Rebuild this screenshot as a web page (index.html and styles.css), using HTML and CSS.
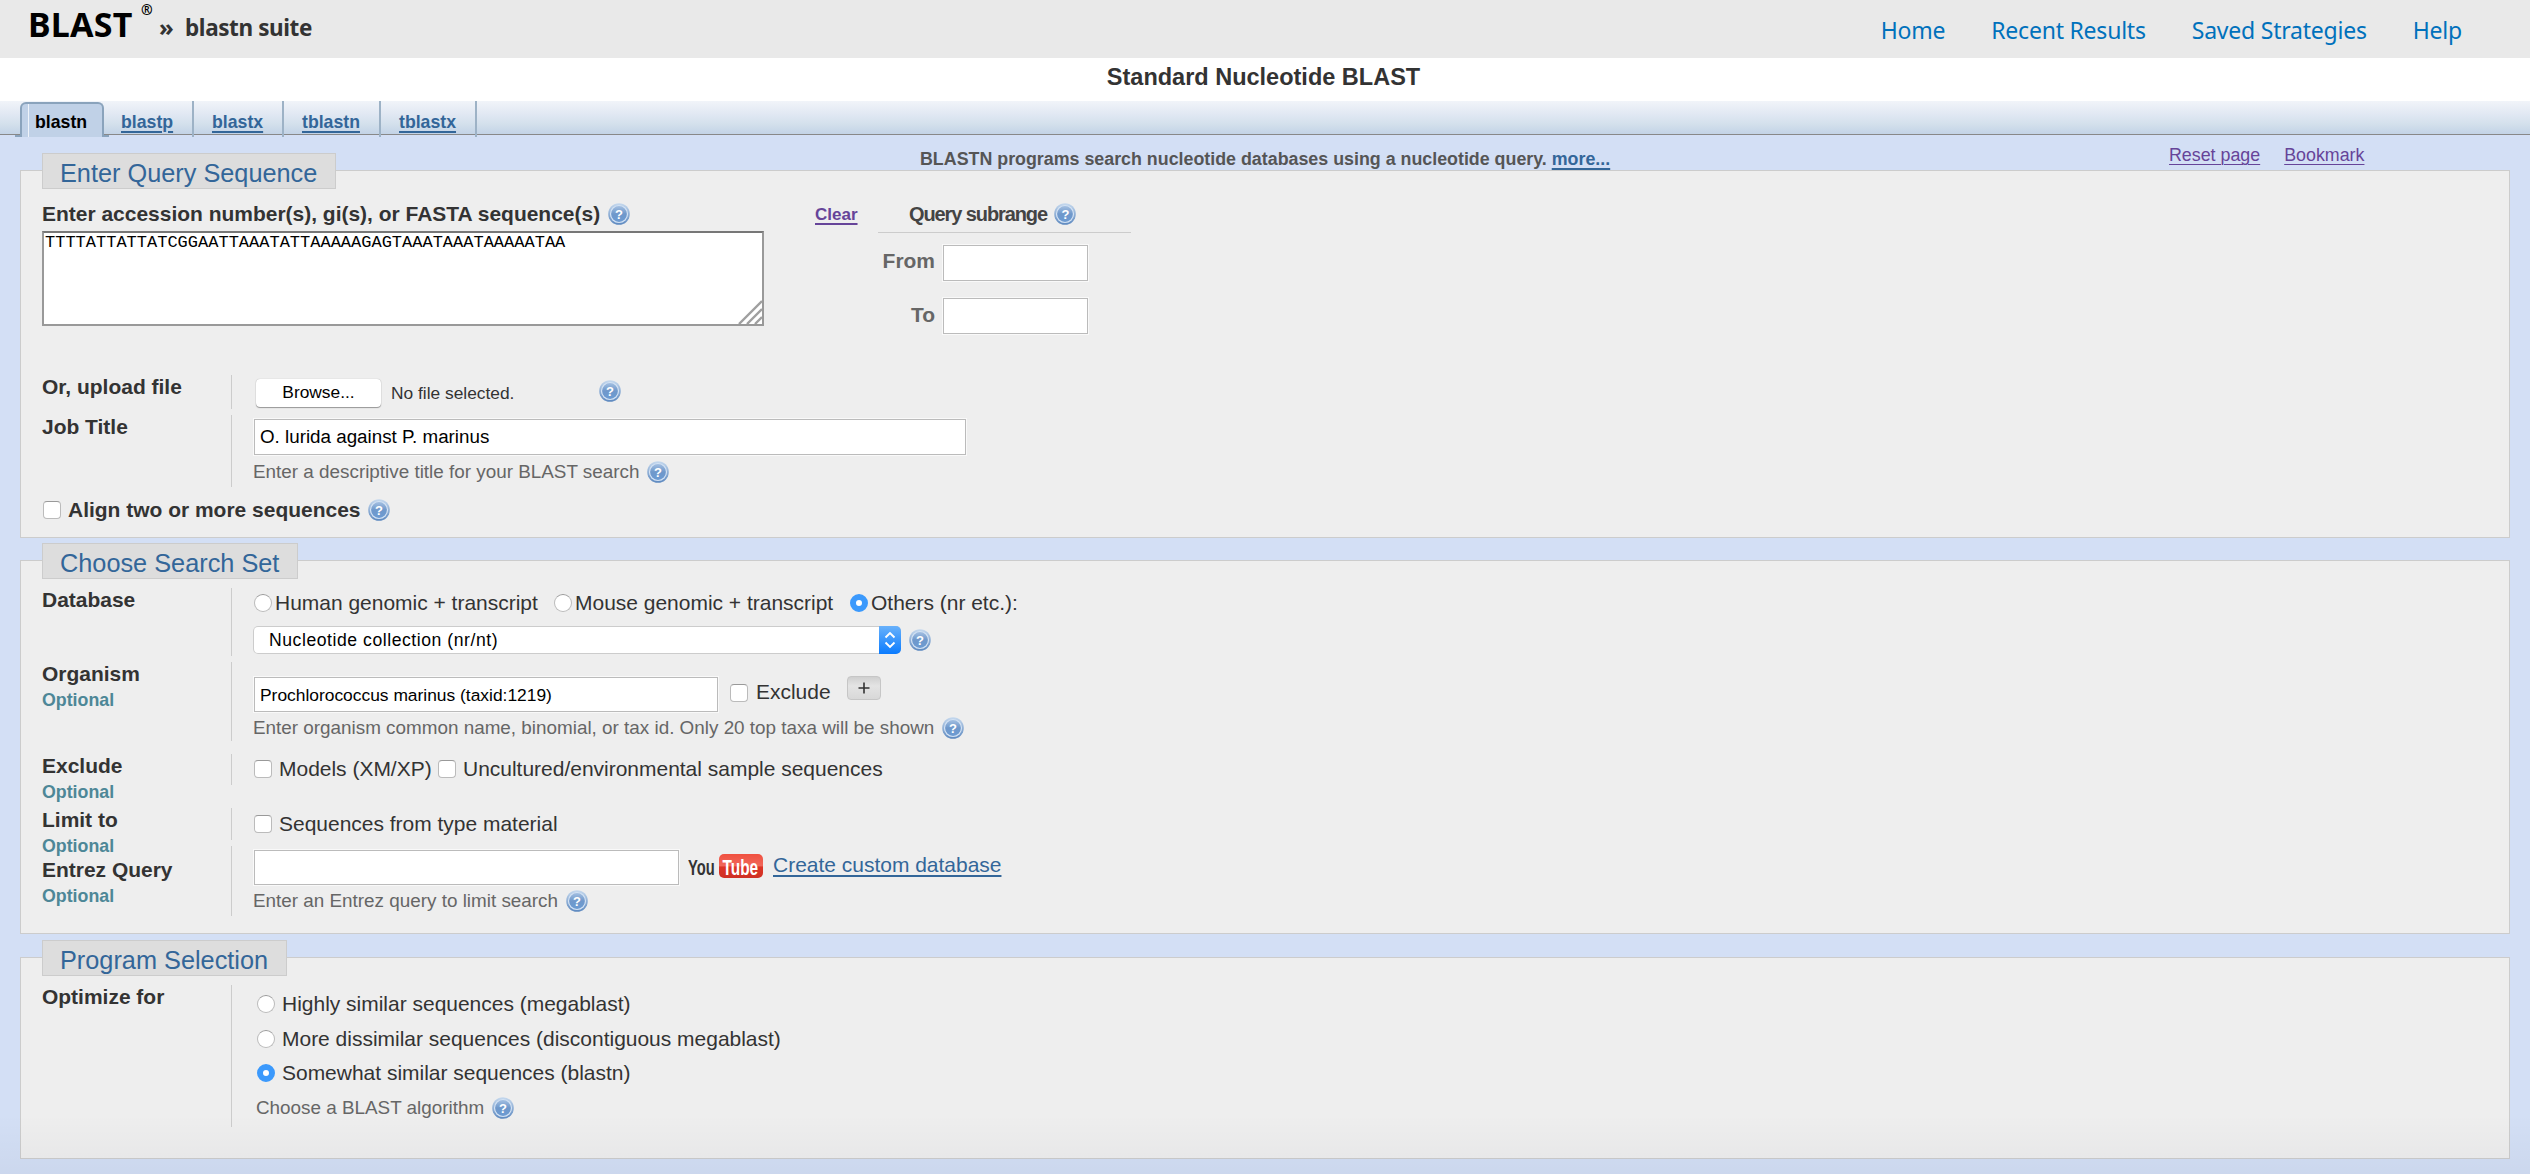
FILE: index.html
```html
<!DOCTYPE html>
<html lang="en">
<head>
<meta charset="utf-8">
<title>Standard Nucleotide BLAST</title>
<link rel="stylesheet" href="styles.css">
</head>
<body>
<svg class="defs" width="0" height="0" aria-hidden="true">
  <defs>
    <linearGradient id="ball" x1="0" y1="0" x2="0" y2="1"><stop offset="0" stop-color="#a3bfe1"/><stop offset=".5" stop-color="#6f98cb"/><stop offset="1" stop-color="#6c9bd2"/></linearGradient>
    <linearGradient id="rim" x1="0" y1="0" x2="0" y2="1"><stop offset="0" stop-color="#c6d9ee"/><stop offset="1" stop-color="#5c88bf"/></linearGradient>
    <linearGradient id="tube" x1="0" y1="0" x2="0" y2="1"><stop offset="0" stop-color="#f0503f"/><stop offset=".48" stop-color="#f0675a"/><stop offset=".55" stop-color="#dc3426"/><stop offset="1" stop-color="#cf3024"/></linearGradient>
    <symbol id="help" viewBox="0 0 22 22">
      <circle cx="11" cy="11" r="10.8" fill="url(#rim)"/>
      <circle cx="11" cy="11" r="9.1" fill="#d3e2f4"/>
      <circle cx="11" cy="11" r="7.9" fill="url(#ball)"/>
      <text x="11" y="15.6" text-anchor="middle" font-family="Liberation Sans, sans-serif" font-weight="700" font-size="13" fill="#fff">?</text>
    </symbol>
  </defs>
</svg>

<header class="topbar">
  <div class="brand"><span class="brand-name">BLAST</span><span class="brand-reg">®</span><span class="brand-sep">»</span><span class="brand-suite">blastn suite</span></div>
  <nav class="topnav"><a>Home</a><a>Recent Results</a><a>Saved Strategies</a><a>Help</a></nav>
</header>

<h1 class="title">Standard Nucleotide BLAST</h1>

<nav class="tabs">
  <a class="tab tab-active">blastn</a><a class="tab t2">blastp</a><a class="tab t3">blastx</a><a class="tab t4">tblastn</a><a class="tab t5">tblastx</a>
</nav>

<main>
  <div class="intro">
    <p class="intro-text">BLASTN programs search nucleotide databases using a nucleotide query. <a class="link">more...</a></p>
    <div class="page-links"><a class="visited">Reset page</a><a class="visited">Bookmark</a></div>
  </div>

  <section class="panel panel-query">
    <h2 class="legend">Enter Query Sequence</h2>
    <div class="query">
      <div class="query-main">
        <div class="line strong">Enter accession number(s), gi(s), or FASTA sequence(s)<svg class="help"><use href="#help"/></svg></div>
        <div class="seq">TTTTATTATTATCGGAATTAAATATTAAAAAGAGTAAATAAATAAAAATAA<svg class="grip" viewBox="0 0 24 24"><path d="M1 24 24 1M9 24 24 9M17 24 24 17" fill="none" stroke="#a0a0a0" stroke-width="2.4"/></svg></div>
      </div>
      <a class="visited clear">Clear</a>
      <div class="range">
        <div class="range-head">Query subrange<svg class="help"><use href="#help"/></svg></div>
        <div class="range-row"><span class="range-label">From</span><span class="box box-num"></span></div>
        <div class="range-row range-to"><span class="range-label">To</span><span class="box box-num"></span></div>
      </div>
    </div>
    <div class="row row-upload">
      <div class="name">Or, upload file</div>
      <div class="field"><div class="upload"><span class="browse">Browse...</span><span class="nofile">No file selected.</span><svg class="help"><use href="#help"/></svg></div></div>
    </div>
    <div class="row row-job">
      <div class="name">Job Title</div>
      <div class="field"><div class="box box-job">O. lurida against P. marinus</div><div class="hint">Enter a descriptive title for your BLAST search<svg class="help"><use href="#help"/></svg></div></div>
    </div>
    <div class="line strong align"><span class="check"></span>Align two or more sequences<svg class="help"><use href="#help"/></svg></div>
  </section>

  <section class="panel panel-set">
    <h2 class="legend">Choose Search Set</h2>
    <div class="row row-db">
      <div class="name">Database</div>
      <div class="field">
        <div class="line radios"><span class="radio"></span><span class="r1">Human genomic + transcript</span><span class="radio"></span><span class="r2">Mouse genomic + transcript</span><span class="radio on"></span><span class="r3">Others (nr etc.):</span></div>
        <div class="select-line"><div class="select"><span class="select-text">Nucleotide collection (nr/nt)</span><span class="select-btn"><svg width="12" height="18" viewBox="0 0 12 18"><path d="M1.5 6.5 6 2l4.5 4.5M1.5 11.5 6 16l4.5-4.5" fill="none" stroke="#fff" stroke-width="1.9"/></svg></span></div><svg class="help"><use href="#help"/></svg></div>
      </div>
    </div>
    <div class="row row-org">
      <div class="name">Organism<span class="opt">Optional</span></div>
      <div class="field">
        <div class="org-line"><div class="box box-org">Prochlorococcus marinus (taxid:1219)</div><span class="check"></span><span class="org-ex">Exclude</span><span class="plus"><svg width="12" height="12" viewBox="0 0 12 12"><path d="M6 .5v11M.5 6h11" stroke="#333" stroke-width="1.6"/></svg></span></div>
        <div class="hint">Enter organism common name, binomial, or tax id. Only 20 top taxa will be shown<svg class="help"><use href="#help"/></svg></div>
      </div>
    </div>
    <div class="row row-ex">
      <div class="name">Exclude<span class="opt">Optional</span></div>
      <div class="field"><div class="line checks"><span class="check"></span><span class="c1">Models (XM/XP)</span><span class="check"></span><span class="c2">Uncultured/environmental sample sequences</span></div></div>
    </div>
    <div class="row row-limit">
      <div class="name">Limit to<span class="opt">Optional</span></div>
      <div class="field"><div class="line checks"><span class="check"></span><span>Sequences from type material</span></div></div>
    </div>
    <div class="row row-entrez">
      <div class="name">Entrez Query<span class="opt">Optional</span></div>
      <div class="field">
        <div class="entrez-line"><div class="box box-entrez"></div>
          <svg class="youtube" width="76" height="26" viewBox="0 0 76 26" font-family="Liberation Sans, sans-serif" font-weight="700" font-size="22"><rect x="31" y="1" width="44" height="24" rx="5" fill="url(#tube)"/><text transform="translate(0 21.5) scale(.67 1)" fill="#333">You</text><text transform="translate(34.5 21.5) scale(.7 1)" fill="#fff">Tube</text></svg>
          <a class="link custom">Create custom database</a></div>
        <div class="hint">Enter an Entrez query to limit search<svg class="help"><use href="#help"/></svg></div>
      </div>
    </div>
  </section>

  <section class="panel panel-prog">
    <h2 class="legend">Program Selection</h2>
    <div class="row row-opt">
      <div class="name">Optimize for</div>
      <div class="field programs">
        <div class="line"><span class="radio"></span>Highly similar sequences (megablast)</div>
        <div class="line"><span class="radio"></span>More dissimilar sequences (discontiguous megablast)</div>
        <div class="line"><span class="radio on"></span>Somewhat similar sequences (blastn)</div>
        <div class="hint">Choose a BLAST algorithm<svg class="help"><use href="#help"/></svg></div>
      </div>
    </div>
  </section>
</main>
<div class="shade"></div>
</body>
</html>
```
FILE: styles.css
```css
* { box-sizing: border-box; }
html, body { margin: 0; height: 1174px; overflow: hidden; }
body {
  position: relative;
  background: #d3dff5;
  color: #333;
  font: 20.97px/24px "Liberation Sans", Arial, sans-serif;
}
h1, h2, p { margin: 0; }
.defs { display: block; position: absolute; }

/* Header */
.topbar {
  display: flex;
  justify-content: space-between;
  height: 58px;
  padding: 0 68px 0 28px;
  background: #e9e9e9;
  font-family: "Noto Sans", "Open Sans", sans-serif;
}
.brand { display: flex; align-items: flex-start; font-weight: 700; white-space: nowrap; }
.brand-name { width: 113px; padding-top: 4px; font-size: 34px; line-height: 40px; color: #000; letter-spacing: .2px; }
.brand-reg { width: 18px; padding-top: 2px; font-size: 14px; line-height: 16px; color: #000; }
.brand-sep { width: 26px; padding-top: 12px; font-size: 24px; line-height: 30px; }
.brand-suite { padding-top: 13px; font-size: 22.5px; line-height: 30px; letter-spacing: -.4px; }
.topnav { display: flex; gap: 46px; padding-top: 15px; font-size: 23px; line-height: 30px; color: #0071bc; letter-spacing: -.22px; }

.title { height: 43px; padding-top: 6px; background: #fff; text-align: center; font-size: 23.5px; line-height: 26px; padding-right: 3px; }

/* Tabs */
.tabs {
  display: flex;
  height: 34px;
  padding-left: 20px;
  border-bottom: 1px solid #888;
  background: linear-gradient(#f1f4f9, #e1e8f3 40%, #d3e0ec 70%, #c3d3e6);
  font-size: 17.7px;
  font-weight: 700;
  line-height: 20px;
}
.tab { height: 36px; padding: 11px 0 0 17px; color: #369; text-decoration: underline; text-decoration-thickness: 2px; text-underline-offset: 3px; border-right: 2px solid #9db2c6; }
.tab-active {
  position: relative;
  width: 84px;
  height: 35px;
  margin-top: 1px;
  padding: 8px 0 0 13px;
  border: 2px solid #8aa3bc;
  border-bottom: 0;
  border-radius: 6px 6px 0 0;
  background: linear-gradient(#eef3fa, #eef3fa) 6px 0 / 1px 100% no-repeat #c0d1e7;
  color: #000;
  text-decoration: none;
}
.tab-active::before, .tab-active::after { content: ""; position: absolute; bottom: 0; width: 6px; height: 2px; background: #8aa3bc; }
.tab-active::before { left: -7px; }
.tab-active::after { right: -7px; }
.t2 { width: 90px; }
.t3 { width: 90px; padding-left: 18px; }
.t4 { width: 97px; padding-left: 18px; }
.t5 { width: 96px; padding-left: 18px; }

.intro { display: flex; height: 35px; font-size: 17.83px; line-height: 20px; }
.intro-text { width: 1249px; margin-left: 920px; padding-top: 14px; font-weight: 700; color: #555; white-space: nowrap; }
.page-links { display: flex; gap: 24px; padding-top: 10px; }
.link { color: #369; text-decoration: underline; text-underline-offset: 3px; text-decoration-thickness: 2px; }
.visited { color: #649; text-decoration: underline; text-underline-offset: 3px; text-decoration-thickness: 1px; }

/* Panels */
.panel { width: 2490px; margin-left: 20px; padding: 0 21px; border: 1px solid #ccc; background: #eee; }
.panel-query { height: 368px; }
.panel-set { height: 374px; margin-top: 22px; }
.panel-prog { height: 202px; margin-top: 23px; }
.legend {
  width: max-content;
  height: 36px;
  margin-top: -18px;
  padding: 0 18px 0 17px;
  border: 1px solid #ccc;
  background: #ddd;
  color: #369;
  font-size: 25.3px;
  font-weight: 400;
  line-height: 38px;
}
.help { flex: none; width: 22px; height: 22px; margin-left: 8px; }
.line, .hint { display: flex; align-items: center; height: 24px; white-space: nowrap; }
.hint { color: #666; font-size: 18.87px; }
.strong { font-weight: 700; }

.query { display: flex; height: 186px; padding-top: 13px; }
.query-main { width: 722px; }
.seq {
  display: flex;
  justify-content: space-between;
  height: 95px;
  margin-top: 5px;
  padding-left: 1px;
  border: 2px solid #999;
  border-top-color: #777;
  background: #fff;
  color: #000;
  font: 17px/20px "Liberation Mono", "Courier New", monospace;
}
.grip { width: 24px; height: 24px; margin: auto 0 0; }
.clear { width: 63px; margin: 1px 0 0 51px; font-size: 17px; font-weight: 700; text-decoration-thickness: 2px; }
.range { width: 253px; }
.range-head { display: flex; align-items: center; height: 31px; padding: 0 0 7px 31px; border-bottom: 1px solid #ccc; font-size: 20px; font-weight: 700; letter-spacing: -1.1px; color: #444; white-space: nowrap; }
.range-head .help { margin-left: 7px; }
.range-row { display: flex; align-items: center; height: 36px; margin-top: 12px; font-weight: 700; color: #666; }
.range-to { margin-top: 17px; }
.range-label { width: 57px; margin-right: 8px; padding-bottom: 4px; text-align: right; }
.range-to .range-label { padding-bottom: 2px; }

.box { display: flex; align-items: center; border: 1px solid #bbb; outline: 1px solid #f9f9f9; background: #fff; color: #000; white-space: nowrap; }
.box-num { width: 145px; height: 36px; }

/* Form rows */
.row { display: flex; }
.name { width: 189px; font-weight: 700; white-space: nowrap; }
.opt { display: block; margin-top: 2px; font-size: 17.8px; color: #4d8797; }
.field { height: 100%; padding-left: 21px; border-left: 1px solid #ccc; }

.row-upload { height: 34px; }
.upload { display: flex; align-items: center; height: 28px; margin: 4px 0 0 3px; font-size: 17.35px; }
.browse { width: 125px; height: 28px; border-radius: 4px; background: #fff; box-shadow: 0 1px 1px rgba(0,0,0,.35), 0 0 1px rgba(0,0,0,.3); color: #000; line-height: 27px; text-align: center; }
.nofile { width: 210px; padding: 0 0 1px 10px; white-space: nowrap; }
.upload .help { margin: 0 0 4px 8px; }

.row-job { height: 72px; margin-top: 6px; }
.box-job { width: 712px; height: 36px; margin: 4px 0 5px 1px; padding-left: 5px; font-size: 18.8px; }
.align { margin-top: 11px; }
.align .check { margin: 0 7px 0 1px; }

.check { flex: none; width: 18px; height: 18px; border: 1px solid #bbb; border-top-color: #999; border-radius: 4px; background: #fff; }
.radio { flex: none; width: 18px; height: 18px; border: 1px solid #bbb; border-top-color: #999; border-radius: 50%; background: #fff; }
.radio.on { border: 6px solid #3b99fc; }

.row-db { height: 68px; margin-top: 9px; }
.radios { margin: 3px 0 0 1px; }
.radios span:not(.radio) { padding-left: 3px; }
.r1 { width: 282px; }
.r2 { width: 278px; }
.select-line { display: flex; align-items: center; height: 28px; margin-top: 11px; }
.select { display: flex; justify-content: space-between; width: 648px; height: 28px; border-radius: 5px; background: #fff; box-shadow: inset 0 0 0 1px #ccc; font-size: 17.6px; line-height: 28px; letter-spacing: .55px; color: #000; }
.select-text { padding-left: 16px; }
.select-btn { display: flex; align-items: center; justify-content: center; width: 22px; border-radius: 0 5px 5px 0; background: linear-gradient(#68b1fb, #0a7bfe); }

.row-org { height: 79px; margin-top: 6px; }
.org-line { display: flex; height: 35px; margin: 15px 0 4px 1px; }
.box-org { width: 464px; height: 35px; padding-left: 5px; font-size: 17.4px; }
.org-line .check { margin: 7px 8px 0 12px; }
.org-ex { width: 91px; padding-top: 3px; }
.plus { display: flex; align-items: center; justify-content: center; width: 34px; height: 24px; margin-top: -1px; border: 1px solid #c6c6c6; border-radius: 4px; background: linear-gradient(#cfcfcf, #e4e4e4 40%, #d8d8d8); }

.row-ex { height: 31px; margin-top: 13px; }
.checks { margin: 3px 0 0 1px; }
.checks .check + span { padding-left: 7px; }
.c1 { width: 166px; }
.row-limit { height: 32px; margin-top: 23px; }
.row-limit .checks { margin-top: 4px; }

.row-entrez { height: 70px; margin-top: 6px; }
.row-entrez .name { padding-top: 12px; }
.entrez-line { display: flex; height: 35px; margin: 4px 0 4px 1px; }
.box-entrez { width: 425px; height: 35px; }
.youtube { margin: 3px 9px 0 9px; }
.custom { padding-top: 3px; }

.row-opt { height: 142px; margin-top: 9px; }
.programs { display: grid; align-content: start; gap: 10.7px; padding: 7px 0 0 25px; }
.programs .radio { margin-right: 7px; }
.programs .hint { margin-left: -1px; }

/* Window edge shadow along the bottom */
.shade { position: absolute; inset: auto 0 0 0; height: 60px; background: linear-gradient(rgba(0,0,0,0), rgba(0,0,30,.035)); pointer-events: none; }
```
